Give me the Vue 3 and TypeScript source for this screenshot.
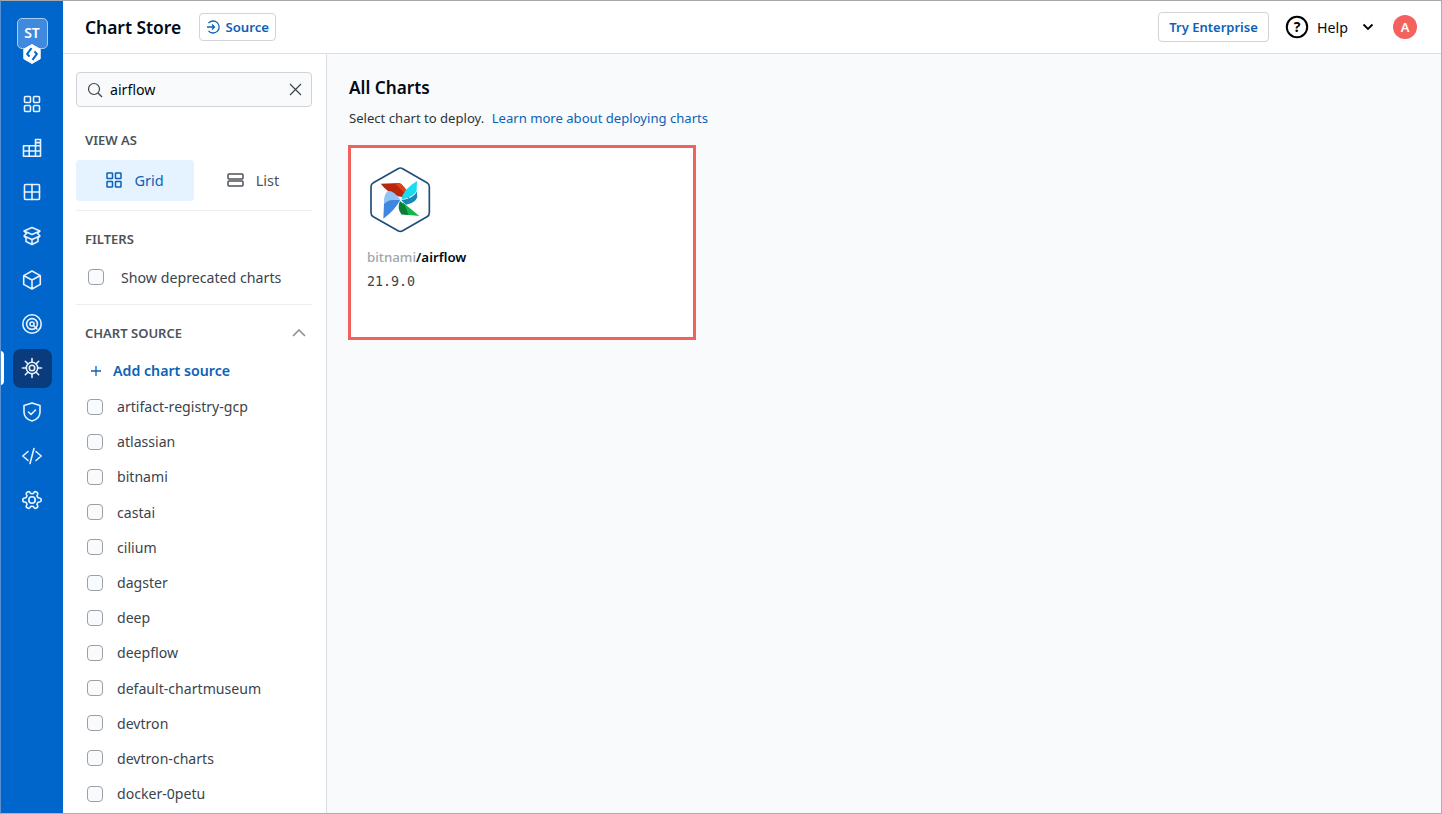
<script setup lang="ts">
const sources: string[] = [
  'artifact-registry-gcp', 'atlassian', 'bitnami', 'castai', 'cilium', 'dagster',
  'deep', 'deepflow', 'default-chartmuseum', 'devtron', 'devtron-charts', 'docker-0petu',
]
</script>

<template>
  <div class="app">
    <aside class="rail">
      <div class="brand">
        <div class="org">ST</div>
        <svg class="bolt" width="20" height="20" viewBox="0 0 20 20">
          <path d="M10 .5l8.200 4.700v9.600L10 19.500l-8.200-4.700V5.200z" fill="#fff" stroke="#fff" stroke-linejoin="round" />
          <path d="M9.500 4.200L5.200 10l2.300 2.600M10.500 15.800l4.300-5.800-2.300-2.600" fill="none" stroke="#0066cc" stroke-width="2" />
        </svg>
      </div>
      <nav class="nav">
        <a class="nav-item">
          <svg viewBox="0 0 20 20"><rect x="2.500" y="2.500" width="6" height="6" rx="1" /><rect x="11.500" y="2.500" width="6" height="6" rx="1" /><rect x="2.500" y="11.500" width="6" height="6" rx="1" /><rect x="11.500" y="11.500" width="6" height="6" rx="1" /></svg>
        </a>
        <a class="nav-item">
          <svg viewBox="0 0 20 20"><path d="M1.500 7.700h12V1.500h5v16.800h-17zM1.500 13h17M7.200 7.700v10.600M13.500 7.700v10.600M13.500 7.700h5M13.500 4.600h5" /></svg>
        </a>
        <a class="nav-item">
          <svg viewBox="0 0 20 20"><rect x="2.500" y="2.500" width="15" height="15" rx="1" /><path d="M10 2.500v15M2.500 10h15" /></svg>
        </a>
        <a class="nav-item">
          <svg viewBox="0 0 20 20"><path d="M10 1.500l8 3.500-8 3.500-8-3.500zM2 5l2.500 2.500L2 10l8 3.500 8-3.500-2.500-2.500L18 5M2 10l2 2v3.500l6 3 6-3V12l2-2M10 13.500v5" /></svg>
        </a>
        <a class="nav-item">
          <svg viewBox="0 0 20 20"><path d="M10 1l8.300 4.600v8.800L10 19l-8.300-4.600V5.600zM2 5.800L10 10l8-4.200M10 10v9" /></svg>
        </a>
        <a class="nav-item">
          <svg viewBox="0 0 20 20"><circle cx="10" cy="10" r="9.200" /><circle cx="10" cy="10" r="5.400" /><circle cx="10" cy="10" r="2" /><path d="M11.500 11.500L15 15" /></svg>
        </a>
        <a class="nav-item active">
          <svg viewBox="0 0 20 20"><circle cx="10" cy="10" r="5.700" /><circle cx="10" cy="10" r="2.700" /><path d="M10 .5v3.800M10 15.700v3.800M.5 10h3.800M15.700 10h3.800M3.300 3.300L6 6M14 14l2.700 2.700M16.700 3.300L14 6M6 14l-2.700 2.700" /></svg>
        </a>
        <a class="nav-item">
          <svg viewBox="0 0 20 20"><path d="M10 1l8 2.600v6.400c0 5-3.500 7.700-8 9-4.500-1.300-8-4-8-9V3.600zM6.500 10l2.500 2.500 4.500-4.500" /></svg>
        </a>
        <a class="nav-item">
          <svg viewBox="0 0 20 20"><path d="M6 5.500L.8 10 6 14.500M14 5.500l5.200 4.500-5.200 4.500M12 2.500L8 17.500" /></svg>
        </a>
        <a class="nav-item">
          <svg class="gear" viewBox="0 0 24 24"><g transform="rotate(90 12 12)"><path d="M12.220 2h-.44a2 2 0 0 0-2 2v.18a2 2 0 0 1-1 1.730l-.43.25a2 2 0 0 1-2 0l-.15-.08a2 2 0 0 0-2.730.73l-.22.38a2 2 0 0 0 .73 2.730l.15.1a2 2 0 0 1 1 1.720v.51a2 2 0 0 1-1 1.740l-.15.09a2 2 0 0 0-.73 2.730l.22.38a2 2 0 0 0 2.730.73l.15-.08a2 2 0 0 1 2 0l.43.25a2 2 0 0 1 1 1.730V20a2 2 0 0 0 2 2h.44a2 2 0 0 0 2-2v-.18a2 2 0 0 1 1-1.730l.43-.25a2 2 0 0 1 2 0l.15.08a2 2 0 0 0 2.730-.73l.22-.39a2 2 0 0 0-.73-2.730l-.15-.08a2 2 0 0 1-1-1.740v-.5a2 2 0 0 1 1-1.740l.15-.09a2 2 0 0 0 .73-2.730l-.22-.38a2 2 0 0 0-2.730-.73l-.15.08a2 2 0 0 1-2 0l-.43-.25a2 2 0 0 1-1-1.730V4a2 2 0 0 0-2-2z" /><circle cx="12" cy="12" r="3.500" /></g></svg>
        </a>
      </nav>
    </aside>

    <div class="shell">
      <header class="topbar">
        <h1 class="page-title">Chart Store</h1>
        <button class="source-btn">
          <svg width="14" height="14" viewBox="0 0 14 14" fill="none" stroke="currentColor" stroke-width="1.300">
            <path d="M2.500 3.200A6 6 0 1 1 2.500 10.800M1 7h7.500M6 4.500L8.500 7 6 9.500" />
          </svg>
          Source
        </button>
        <div class="spacer"></div>
        <button class="try-btn">Try Enterprise</button>
        <svg class="help-icon" width="24" height="24" viewBox="0 0 24 24">
          <circle cx="12" cy="12" r="10.200" fill="none" stroke="#000" stroke-width="2" />
          <text x="12" y="16.700" text-anchor="middle" class="help-q">?</text>
        </svg>
        <span class="help-text">Help</span>
        <svg class="help-caret" width="12" height="8" viewBox="0 0 12 8" fill="none" stroke="#000" stroke-width="1.800"><path d="M1.500 1.500L6 6l4.500-4.500" /></svg>
        <div class="avatar">A</div>
      </header>

      <div class="body">
        <aside class="filters">
          <div class="search">
            <svg width="16" height="16" viewBox="0 0 16 16" fill="none" stroke="#3b444c" stroke-width="1.200"><circle cx="7" cy="7" r="5.500" /><path d="M11 11l4 4" /></svg>
            <span class="search-text">airflow</span>
            <svg width="13" height="13" viewBox="0 0 13 13" fill="none" stroke="#3b444c" stroke-width="1.200"><path d="M1 1l11 11M12 1L1 12" /></svg>
          </div>

          <div class="label label-view">VIEW AS</div>
          <div class="toggle">
            <div class="toggle-item selected">
              <svg width="16" height="16" viewBox="0 0 16 16" fill="none" stroke="currentColor" stroke-width="1.500"><rect x="1" y="1" width="5.500" height="5.500" rx=".6" /><rect x="9.500" y="1" width="5.500" height="5.500" rx=".6" /><rect x="1" y="9.500" width="5.500" height="5.500" rx=".6" /><rect x="9.500" y="9.500" width="5.500" height="5.500" rx=".6" /></svg>
              Grid
            </div>
            <div class="toggle-item">
              <svg width="17" height="14" viewBox="0 0 17 14" fill="none" stroke="currentColor" stroke-width="1.500"><rect x="1" y="1" width="15" height="5" rx="1" /><rect x="1" y="8" width="15" height="5" rx="1" /></svg>
              List
            </div>
          </div>
          <hr class="rule rule-view" />

          <div class="label label-filters">FILTERS</div>
          <label class="deprecated">
            <span class="box"></span>
            Show deprecated charts
          </label>
          <hr class="rule rule-filters" />

          <div class="label label-source">
            CHART SOURCE
            <svg width="14" height="8" viewBox="0 0 14 8" fill="none" stroke="#8a9098" stroke-width="1.600"><path d="M1 7l6-6 6 6" /></svg>
          </div>
          <div class="add-source">
            <svg width="10" height="10" viewBox="0 0 10 10" fill="none" stroke="currentColor" stroke-width="1.300"><path d="M5 0v10M0 5h10" /></svg>
            Add chart source
          </div>
          <ul class="source-list">
            <li v-for="s in sources" :key="s" class="source-row">
              <span class="box"></span>
              {{ s }}
            </li>
          </ul>
        </aside>

        <main class="content">
          <h2 class="content-title">All Charts</h2>
          <p class="content-sub">
            Select chart to deploy.
            <a class="link">Learn more about deploying charts</a>
          </p>
          <div class="card">
            <svg class="chart-logo" width="66" height="70" viewBox="64 76 198 210">
              <path d="M160 87a14 14 0 0 1 14 0L247 129a14 14 0 0 1 7 12v78a14 14 0 0 1-7 12L174 273a14 14 0 0 1-14 0L86 231a14 14 0 0 1-7-12V141a14 14 0 0 1 7-12z" fill="#fff" stroke="#1f4e79" stroke-width="5" />
              <path d="M108 132L165 130Q186 142 193 176L160 170Q130 160 108 132z" fill="#b8260e" />
              <path d="M150 131L165 130Q186 142 193 176L170 150z" fill="#e0431a" />
              <path d="M217 124L216 152Q210 172 170 180Q174 150 217 124z" fill="#19dcf2" />
              <path d="M216 155Q212 174 170 182L184 195Q212 190 218 172z" fill="#1a86b8" />
              <path d="M174 188L224 229L170 224z" fill="#12b84a" />
              <path d="M166 184Q156 205 170 224L192 226L180 196z" fill="#0b7d38" />
              <path d="M116 237L118 192Q125 176 167 180Q152 210 116 237z" fill="#3f86e0" />
              <path d="M128 155Q145 150 167 180Q135 176 118 192Q116 170 128 155z" fill="#8fc4f5" />
            </svg>
            <div class="chart-name"><span class="repo">bitnami</span>/airflow</div>
            <div class="chart-version">21.9.0</div>
          </div>
        </main>
      </div>
    </div>
  </div>
</template>

<style>
html, body { margin: 0; padding: 0; overflow: hidden; background: #fff; }
</style>

<style scoped>
* { box-sizing: border-box; }
.app {
  width: 1442px; height: 814px; display: flex; overflow: hidden;
  font-family: "Noto Sans", "Open Sans", sans-serif; color: #000a14;
  border-top: 1px solid #a8a8a8; border-right: 1px solid #b0b0b0; border-bottom: 1px solid #b0b0b0; border-left: 1px solid #5a8fd0;
}
.rail { width: 62px; flex: none; background: #0066cc; display: flex; flex-direction: column; align-items: center; }
.brand { height: 81px; padding-top: 17px; display: flex; flex-direction: column; align-items: center; }
.org {
  width: 31px; height: 31px; border-radius: 5px; background: #3f8ade; border: 1px solid #a8cdf2;
  color: #fff; font-size: 14px; font-weight: 600; text-align: center; line-height: 27px;
}
.bolt { margin-top: -5px; }
.nav { display: flex; flex-direction: column; align-items: center; width: 100%; }
.nav-item { position: relative; width: 39px; height: 39px; margin: 2.500px 0; display: flex; align-items: center; justify-content: center; border-radius: 8px; }
.nav-item svg { width: 20px; height: 20px; fill: none; stroke: #e8f3ff; stroke-width: 1.600; stroke-linejoin: round; stroke-linecap: round; overflow: visible; }
.nav-item svg.gear { width: 22px; height: 22px; stroke-width: 1.800; }
.nav-item.active { background: #0a3c7d; }
.nav-item.active::before { content: ""; position: absolute; left: -13px; top: 2px; width: 4px; height: 34px; background: #fff; border-radius: 0 4px 4px 0; }
.shell { flex: 1; min-width: 0; display: flex; flex-direction: column; }
.topbar { height: 53px; flex: none; background: #fff; border-bottom: 1px solid #dcdfe3; display: flex; align-items: center; padding: 0 24px 0 22px; }
.page-title { margin: 0; font-size: 17.400px; font-weight: 600; line-height: 24px; }
.source-btn {
  margin-left: 18px; width: 77px; height: 28px; border: 1px solid #d0d4d9; border-radius: 4px; background: #fff;
  color: #0b62b8; font: 600 13.200px "Noto Sans", sans-serif; display: flex; align-items: center; justify-content: center; gap: 5px; padding: 0;
}
.spacer { flex: 1; }
.try-btn { width: 111px; height: 30px; border: 1px solid #d0d4d9; border-radius: 4px; background: #fff; color: #0b62b8; font: 600 13px "Noto Sans", sans-serif; padding: 0; }
.help-icon { margin-left: 16px; }
.help-q { font: 700 14px "Noto Sans", sans-serif; fill: #000; }
.help-text { margin-left: 8px; font-size: 14.200px; }
.help-caret { margin-left: 14px; }
.avatar { margin-left: 19px; width: 24px; height: 24px; border-radius: 50%; background: #f3625e; color: #fff; font-size: 13px; font-weight: 600; text-align: center; line-height: 24px; }
.body { flex: 1; min-height: 0; display: flex; }
.filters { width: 264px; flex: none; background: #fff; border-right: 1px solid #dcdfe3; padding: 18px 14px 0 13px; overflow: hidden; }
.search { height: 35px; background: #f8fafc; border: 1px solid #d0d4d9; border-radius: 4px; display: flex; align-items: center; padding: 0 9px 0 10px; }
.search-text { flex: 1; margin-left: 7px; font-size: 14.200px; }
.label { font-size: 13px; font-weight: 600; color: #4b535b; line-height: 16px; padding-left: 9px; }
.label-view { margin-top: 25px; }
.toggle { margin-top: 12px; display: flex; }
.toggle-item { flex: 1; height: 41px; padding-bottom: 2px; border-radius: 4px; display: flex; align-items: center; justify-content: center; gap: 12px; font-size: 14.500px; color: #4b535b; }
.toggle-item.selected { background: #e5f2ff; color: #0b62b8; }
.rule { border: 0; border-top: 1px solid #eceef0; margin: 0; }
.rule-view { margin-top: 9px; }
.label-filters { margin-top: 20px; }
.deprecated { margin-top: 20px; padding-left: 12px; display: flex; align-items: center; gap: 17px; font-size: 14.200px; color: #3b444c; height: 20px; }
.box { width: 16px; height: 16px; flex: none; border: 1.500px solid #9aa0a6; border-radius: 4px; background: #f8fafc; }
.rule-filters { margin-top: 17px; }
.label-source { margin-top: 20px; display: flex; align-items: center; justify-content: space-between; padding-right: 6px; }
.add-source { margin-top: 20px; padding-left: 15px; display: flex; align-items: center; gap: 12px; color: #0b62b8; font-size: 14.200px; font-weight: 600; line-height: 20px; }
.source-list { list-style: none; margin: 8px 0 0; padding: 0 0 0 11px; }
.source-row { height: 35.200px; display: flex; align-items: center; gap: 14px; font-size: 14.100px; color: #3b444c; }
.content { flex: 1; min-width: 0; background: #f8fafc; padding: 21px 22px 0; }
.content-title { margin: 0; font-size: 17.200px; font-weight: 600; line-height: 26px; }
.content-sub { margin: 8px 0 0; font-size: 13.100px; line-height: 18px; color: #2c3339; }
.link { color: #0b62b8; margin-left: 4px; }
.card { margin: 18px 0 0 -1px; width: 348px; height: 195px; background: #fff; border: 3px solid #f0625c; padding: 17px 16px 0; }
.chart-logo { display: block; margin-left: -1px; }
.chart-name { margin-top: 12px; font-size: 13.300px; font-weight: 600; line-height: 20px; color: #000a14; }
.repo { color: #a0a6ac; font-weight: 500; }
.chart-version { margin-top: 5px; font-family: "DejaVu Sans Mono", "Liberation Mono", monospace; font-size: 13.300px; line-height: 20px; color: #3b444c; }
</style>
